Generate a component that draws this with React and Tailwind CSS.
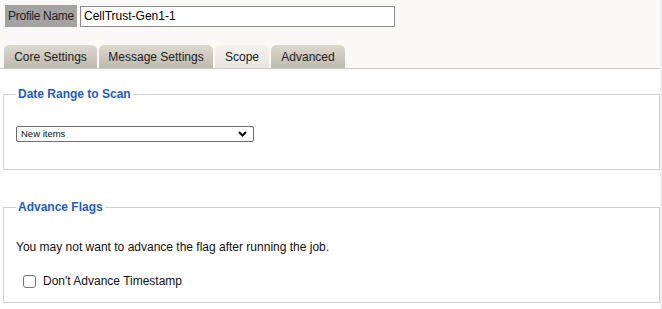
export default function App() {
  const tabs = [
    { label: "Core Settings", w: "w-[93px]", active: false },
    { label: "Message Settings", w: "w-[114px]", active: false },
    { label: "Scope", w: "w-[54px]", active: true },
    { label: "Advanced", w: "w-[74px]", active: false },
  ];
  return (
    <div className="w-[662px] h-[309px] flex bg-white text-[12px] text-[#111] font-['Liberation_Sans',Arial,sans-serif]">
      <div className="w-[660px] flex flex-col">
        <div className="bg-[#faf9f7] h-[69px] flex flex-col border-b border-[#cccccc]">
          <div className="flex items-center pt-[5px] pl-[5px] gap-[3px]">
            <div className="bg-[#a3a3a3] w-[72px] h-[22px] flex items-center justify-center tracking-[-0.3px] text-[#222]">Profile Name</div>
            <div className="w-[315px] h-[21px] border border-[#8a8a8a] bg-white flex items-center px-[3px] text-[#000]">CellTrust-Gen1-1</div>
          </div>
          <div className="flex mt-auto pl-[4px] gap-[2px]">
            {tabs.map((t) => (
              <div
                key={t.label}
                className={
                  "h-[23px] rounded-t-[5px] flex items-center justify-center text-[#222] " +
                  t.w +
                  (t.active
                    ? " bg-gradient-to-b from-[#f4f3ef] to-[#e6e4de]"
                    : " bg-gradient-to-b from-[#dcd9d0] to-[#bdb9ad]")
                }
              >
                {t.label}
              </div>
            ))}
          </div>
        </div>
        <div className="flex flex-col pl-[3px] pt-[17px]">
          <fieldset className="border border-[#d0d0d0] h-[84px] px-[12px]">
            <legend className="px-[2px] text-[#1c5cc4] font-bold text-[12px] leading-[16px]">Date Range to Scan</legend>
            <div className="mt-[24px] w-[238px] h-[16px] border border-[#707070] rounded-[2px] flex items-center justify-between pl-[4px] pr-[6px] text-[9.5px] text-[#111]">
              <span>New items</span>
              <svg width="9" height="6" viewBox="0 0 9 6"><path d="M1 1 L4.5 4.5 L8 1" stroke="#111" strokeWidth="2" fill="none" /></svg>
            </div>
          </fieldset>
          <fieldset className="border border-[#d0d0d0] h-[104px] mt-[29px] px-[12px]">
            <legend className="px-[2px] text-[#1c5cc4] font-bold text-[12px] leading-[16px]">Advance Flags</legend>
            <div className="mt-[24px] leading-[16px] text-[#111]">You may not want to advance the flag after running the job.</div>
            <div className="flex items-center mt-[17px] pl-[7px] gap-[7px]">
              <div className="w-[13px] h-[13px] border border-[#767676] rounded-[3px] bg-white"></div>
              <span className="text-[#111]">Don't Advance Timestamp</span>
            </div>
          </fieldset>
        </div>
      </div>
      <div className="w-[2px] bg-[#eeeeee]"></div>
    </div>
  );
}
